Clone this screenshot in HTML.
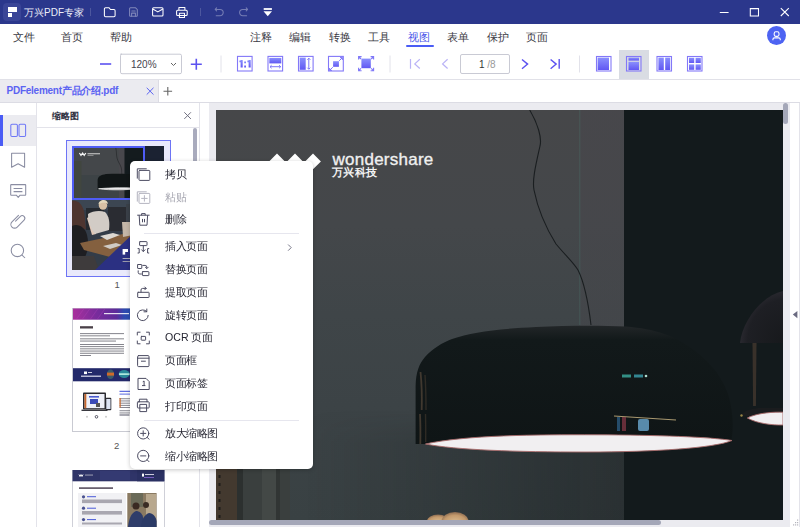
<!DOCTYPE html>
<html><head><meta charset="utf-8">
<style>
*{margin:0;padding:0;box-sizing:border-box}
html,body{width:800px;height:527px;overflow:hidden;background:#fff;font-family:"Liberation Sans",sans-serif;color:#333}
.a{position:absolute}
#title{left:0;top:0;width:800px;height:24px;background:#2b378c}
#menu{left:0;top:24px;width:800px;height:26px;background:#fff}
.mi{position:absolute;top:28px;font-size:11px;line-height:18px;color:#3a3a44;white-space:nowrap}
#tool{left:0;top:50px;width:800px;height:30px;background:#fff;border-bottom:1px solid #e1e1e8}
#tabs{left:0;top:80px;width:800px;height:23px;background:#fff;border-bottom:1px solid #dcdce4}
#tab1{left:0;top:80px;width:159px;height:22px;background:#ebebf0;border-right:1px solid #dcdce4}
#side{left:0;top:103px;width:37px;height:424px;background:#fff;border-right:1px solid #e3e3ea}
#panel{left:37px;top:103px;width:163px;height:424px;background:#fff;border-right:1px solid #e3e3ea}
#canvas{left:209px;top:103px;width:581px;height:424px;background:#ebebf0}
#rstrip{left:790px;top:103px;width:10px;height:424px;background:#fff;border-right:1px solid #e3e3ea}
#page{left:216px;top:110px;width:567px;height:410px;background:#404246;overflow:hidden}
#ctx{left:130px;top:161px;width:183px;height:308px;background:#fff;border-radius:5px;box-shadow:0 1px 4px rgba(0,0,0,.22)}
.ci{position:absolute;left:34.5px;font-size:10px;transform:scale(1.06);transform-origin:0 50%;line-height:14px;color:#33333d;white-space:nowrap}
.ic{position:absolute;left:6px;width:14px;height:14px}
</style></head><body>
<div id="title" class="a">
<div class="a" style="left:3px;top:3px;width:18px;height:18px;border-radius:4px;background:#3a4597"></div>
<div class="a" style="left:7.5px;top:7px;width:9.5px;height:5px;background:#fff"></div>
<div class="a" style="left:7.5px;top:12.75px;width:4.5px;height:4.25px;background:#fff"></div>
<div class="a" style="left:24px;top:4.5px;font-size:10px;line-height:16px;color:#eceef8;white-space:nowrap">万兴PDF专家</div>
<div class="a" style="left:90px;top:8px;width:1px;height:8px;background:rgba(255,255,255,.16)"></div>
<div class="a" style="left:200px;top:8px;width:1px;height:8px;background:rgba(255,255,255,.16)"></div>
<svg class="a" style="left:0;top:0" width="800" height="24" fill="none" stroke="#fff" stroke-width="1.05" stroke-linejoin="round" stroke-linecap="round">
<path d="M104.4 8.9a1.2 1.2 0 0 1 1.2-1.2h3.3l1.6 1.8h3.4a1.2 1.2 0 0 1 1.2 1.2v4.8a1.2 1.2 0 0 1-1.2 1.2h-8.3a1.2 1.2 0 0 1-1.2-1.2z"/>
<g opacity=".4"><path d="M129.6 8.6a.8.8 0 0 1 .8-.8h5.2l1.7 1.7v6a.8.8 0 0 1-.8.8h-6.1a.8.8 0 0 1-.8-.8z"/><path d="M131.6 16.1v-3h3.8v3M131.8 10.9h3.4"/></g>
<path d="M153.6 7.7h8.4a1 1 0 0 1 1 1v6.2a1 1 0 0 1-1 1h-8.4a1 1 0 0 1-1-1v-6.2a1 1 0 0 1 1-1z"/><path d="M153.2 9.2l4.6 2.7l4.6-2.7"/>
<path d="M178.9 10.1v-2.6h6v2.6M177.6 10.2h8.6a1 1 0 0 1 1 1v3.3a1 1 0 0 1-1 1h-8.6a1 1 0 0 1-1-1v-3.3a1 1 0 0 1 1-1zM179.4 13.2h5.1v4.2h-5.1z"/>
<g opacity=".35"><path d="M216.6 7.9l-1.4 1.5l1.4 1.5M215.3 9.4h4.7a3.2 3.2 0 0 1 0 6.4h-3.8"/>
<path d="M246.2 7.9l1.4 1.5l-1.4 1.5M247.5 9.4h-4.7a3.2 3.2 0 0 0 0 6.4h3.8"/></g>
<path d="M263.7 8.1h8.2v1.8h-8.2z" fill="#fff" stroke="none"/>
<path d="M263.5 11.3h8.5l-4.25 5z" fill="#fff" stroke="none"/>
<path d="M719.8 12.5h8.8" stroke-linecap="butt"/>
<path d="M750.3 8.6h8.2v7.4h-8.2z" stroke-linejoin="miter"/>
<path d="M780.8 8.2l8 7.8M788.8 8.2l-8 7.8" stroke-linecap="butt"/>
</svg>
</div>
<div id="menu" class="a"></div>
<div class="mi" style="left:12.5px">文件</div>
<div class="mi" style="left:61px">首页</div>
<div class="mi" style="left:109.5px">帮助</div>
<div class="mi" style="left:249.5px">注释</div>
<div class="mi" style="left:289px">编辑</div>
<div class="mi" style="left:328.5px">转换</div>
<div class="mi" style="left:367.5px">工具</div>
<div class="mi" style="left:407.5px;color:#4a55e8">视图</div>
<div class="a" style="left:406px;top:45px;width:28px;height:2px;background:#4a5cf5;border-radius:1px"></div>
<div class="mi" style="left:447px">表单</div>
<div class="mi" style="left:486.5px">保护</div>
<div class="mi" style="left:525.5px">页面</div>
<div class="a" style="left:767px;top:26px;width:19px;height:19px;border-radius:50%;background:#4d63f2"></div>
<svg class="a" style="left:767px;top:26px" width="19" height="19" fill="none" stroke="#fff" stroke-width="1.1"><rect x="7.2" y="5.8" width="4.8" height="4.6" rx="1.6"/><path d="M5.9 14.3v-.8a1.6 1.6 0 0 1 1.6-1.6h4.2a1.6 1.6 0 0 1 1.6 1.6v.8"/></svg>
<div id="tool" class="a"></div>
<svg class="a" style="left:0;top:50px" width="800" height="29" fill="none" stroke-linecap="butt">
<defs>
<linearGradient id="g1" x1="0" y1="0" x2="0" y2="1"><stop offset="0" stop-color="#8a90fd"/><stop offset="1" stop-color="#6158f3"/></linearGradient>
</defs>
<g stroke="#5c52f0" stroke-width="1.6"><path d="M100 14h11.2"/><path d="M190.8 14.2h11M196.3 8.7v11"/></g>
<path d="M120.5 4.5h59.5a1.5 1.5 0 0 1 1.5 1.5v16.5a1.5 1.5 0 0 1-1.5 1.5h-58a1.5 1.5 0 0 1-1.5-1.5v-16.5a1.5 1.5 0 0 1 1.5-1.5z" stroke="#c9cad4" stroke-width="1" transform="translate(0 -.3)"/>
<path d="M171 13l2.5 2.5l2.5-2.5" stroke="#666" stroke-width="1"/>
<path d="M221 5.5v17M390 5.5v17M579.5 5.5v17" stroke="#e2e2ea" stroke-width="1"/>
<g transform="translate(0 0)">
<rect x="237.5" y="6.4" width="14.6" height="14.6" stroke="#8378f8" stroke-width="1.1"/>
<g fill="url(#g1)" stroke="none"><path d="M240.6 10h2.1v7.6h-2.1zM239.4 10.6l1.4-.6v2l-1.4.3zM248.6 10h2.1v7.6h-2.1zM247.4 10.6l1.4-.6v2l-1.4.3zM244.2 11.5h1.8v1.8h-1.8zM244.2 15.6h1.8v1.8h-1.8z"/></g>
<rect x="268" y="6.4" width="14.6" height="14.6" stroke="#8378f8" stroke-width="1.1"/>
<rect x="269.3" y="7.9" width="12" height="5.5" fill="url(#g1)" stroke="none"/>
<path d="M270 16.7h10.7M271.6 15.2l-1.6 1.5l1.6 1.5M279.1 15.2l1.6 1.5l-1.6 1.5" stroke="#7f78f8" stroke-width="1"/>
<rect x="298.5" y="6.4" width="14.6" height="14.6" stroke="#8378f8" stroke-width="1.1"/>
<rect x="299.7" y="7.6" width="6" height="12.2" fill="url(#g1)" stroke="none"/>
<path d="M308.8 8.2v11M307.3 9.7l1.5-1.5l1.5 1.5M307.3 17.7l1.5 1.5l1.5-1.5" stroke="#7f78f8" stroke-width="1"/>
<rect x="328.5" y="6.4" width="14.8" height="14.6" stroke="#8378f8" stroke-width="1.1"/>
<rect x="333.1" y="11.2" width="5.8" height="5.6" fill="url(#g1)" stroke="none"/>
<path d="M339.2 10.8l3.2-3.2M340 7.6h2.4v2.4M332.8 17.2l-3.2 3.2M329.6 18v2.4h2.4" stroke="#7f78f8" stroke-width="1"/>
<rect x="361.4" y="8.6" width="9.4" height="9.6" fill="url(#g1)" stroke="none"/>
<path d="M358.6 9.6v-3h3M373.6 9.6v-3h-3M358.6 17.8v3h3M373.6 17.8v3h-3M359 7l2 2M373.2 7l-2 2M359 20.4l2-2M373.2 20.4l-2-2" stroke="#7f78f8" stroke-width="1.1"/>
</g>
<g stroke="#b9b2f6" stroke-width="1.2"><path d="M410.5 9v9.8M419.8 9.3l-5 4.6l5 4.6M447.6 9.3l-5 4.6l5 4.6"/></g>
<rect x="460.5" y="4.5" width="49" height="19" rx="1.5" stroke="#c9cad4" stroke-width="1"/>
<g stroke="#5c52f0" stroke-width="1.4"><path d="M522 9.5l5.6 4.6l-5.6 4.6M550.6 9.5l5.6 4.6l-5.6 4.6M559.2 9v9.8"/></g>
<rect x="619" y="-2" width="30" height="31" fill="#d9dce3" stroke="none"/>
<rect x="596.5" y="6.5" width="14.5" height="14.5" stroke="#8378f8" stroke-width="1.1"/>
<rect x="597.6" y="7.6" width="11.4" height="12.4" fill="url(#g1)" stroke="none"/>
<rect x="626.5" y="6.5" width="14.5" height="14.5" stroke="#8378f8" stroke-width="1.1"/>
<rect x="628.5" y="7.6" width="10.5" height="3" fill="url(#g1)" stroke="none"/>
<rect x="628.5" y="11.8" width="10.5" height="8.2" fill="url(#g1)" stroke="none"/>
<rect x="657" y="6.5" width="14.5" height="14.5" stroke="#8378f8" stroke-width="1.1"/>
<rect x="658.4" y="7.6" width="5.4" height="12.4" fill="url(#g1)" stroke="none"/>
<rect x="665.2" y="7.6" width="5" height="12.4" fill="url(#g1)" stroke="none"/>
<rect x="687.5" y="6.5" width="14.5" height="14.5" stroke="#8378f8" stroke-width="1.1"/>
<rect x="689" y="7.8" width="5.2" height="5.2" fill="url(#g1)" stroke="none"/>
<rect x="695.6" y="7.8" width="5.2" height="5.2" fill="url(#g1)" stroke="none"/>
<rect x="689" y="14.4" width="5.2" height="5.4" fill="url(#g1)" stroke="none"/>
<rect x="695.6" y="14.4" width="5.2" height="5.4" fill="url(#g1)" stroke="none"/>
</svg>
<div class="a" style="left:131px;top:57.5px;font-size:10px;line-height:14px;color:#44444e">120%</div>
<div class="a" style="left:479px;top:57.5px;font-size:10px;line-height:14px;color:#333;white-space:nowrap">1 <span style="color:#999">/8</span></div>
<div id="tabs" class="a"></div>
<div id="tab1" class="a"></div>
<div class="a" style="left:6.5px;top:83.5px;font-size:10px;line-height:14px;font-weight:bold;color:#5b63f2;white-space:nowrap;letter-spacing:-0.25px">PDFelement产品介绍.pdf</div>
<svg class="a" style="left:140px;top:80px" width="40" height="22" fill="none" stroke-width="1">
<path d="M146.7 87.8l6.8 6.8M153.5 87.8l-6.8 6.8" stroke="#5b63f2" transform="translate(-140 -80)"/>
<path d="M163.5 91.2h8.6M167.8 86.9v8.6" stroke="#666" stroke-width="1.1" transform="translate(-140 -80)"/>
</svg>
<div id="side" class="a"></div>
<div class="a" style="left:0;top:115px;width:36px;height:31px;background:#ebebf0"></div>
<div class="a" style="left:0;top:115px;width:3px;height:31px;background:#4a5cf5"></div>
<svg class="a" style="left:0;top:103px" width="36" height="170" fill="none" stroke-width="1.05" stroke-linejoin="round">
<g transform="translate(0 -103)">
<rect x="10.8" y="124.3" width="6.6" height="12.2" rx="1.2" stroke="#6f78f6"/>
<rect x="19" y="124.3" width="6.6" height="12.2" rx="1.2" stroke="#6f78f6"/>
<g stroke="#8a8da2">
<path d="M11.6 153.3h13v14l-6.5-3.6l-6.5 3.6z"/>
<path d="M11.2 184.6h14a.5.5 0 0 1 .5.5v9.6a.5.5 0 0 1-.5.5h-5.1l-1.9 2.2l-1.9-2.2h-5.1a.5.5 0 0 1-.5-.5v-9.6a.5.5 0 0 1 .5-.5z"/>
<path d="M13.6 188.4h8.8M13.6 191.6h8.8"/>
<path d="M18.49 215.28L11.98 221.78A3.7 3.7 0 0 0 17.22 227.02L24.07 220.02A2.6 2.6 0 0 0 20.4 216.34L15.59 221.15" stroke-linecap="round"/>
<circle cx="17.4" cy="250.4" r="6.2"/><path d="M21.8 254.8l3.2 3.2"/>
</g></g></svg>
<div id="panel" class="a"></div>
<div class="a" style="left:37px;top:127px;width:162px;height:1px;background:#e3e3ea"></div>
<div class="a" style="left:51.5px;top:108.5px;font-size:9px;line-height:14px;font-weight:bold;color:#2c2c3c;white-space:nowrap">缩略图</div>
<svg class="a" style="left:180px;top:108px" width="16" height="16" fill="none" stroke="#707080" stroke-width="1"><path d="M4.3 4.3l6.6 6.6M10.9 4.3l-6.6 6.6"/></svg>
<div class="a" style="left:193px;top:128px;width:4px;height:60px;border-radius:2px;background:#a9abbd"></div>
<!-- thumb 1 -->
<div class="a" style="left:66px;top:140px;width:105px;height:137px;border:1px solid #6d74f5;background:#e9e9fb"></div>
<svg class="a" style="left:72px;top:146px" width="92" height="124">
<g transform="translate(-72 -146)">
<rect x="72" y="146" width="92" height="54" fill="#44474a"/>
<rect x="72" y="175" width="92" height="25" fill="#3b4244" opacity=".7"/>
<rect x="119" y="146" width="5.5" height="54" fill="#48474c"/>
<rect x="124.5" y="146" width="39.5" height="54" fill="#141b1e"/><rect x="145" y="146" width="19" height="54" fill="#1b2232"/>
<rect x="72" y="161" width="2.5" height="39" fill="#463c34"/><rect x="74.5" y="161" width="7" height="39" fill="#41463f"/>
<path d="M97.6 190V180C98 176 101 175 106 174C118 173.5 130 173.6 135 175C138 177 139 182 138.5 190Z" fill="#111617"/>
<path d="M98.5 188.8C110 187.6 130 187.6 138.5 188.4C130 190 110 190.4 98.5 188.8Z" fill="#eee" stroke="#e4e4e4" stroke-width=".8"/>
<path d="M115 146c2 4 1 8 2 12s3 6 4 9s0.5 5 0.8 7" stroke="#1a1c1e" stroke-width=".5" fill="none"/>
<path d="M145 183c2-6 8-9 19-9v16h-19z" fill="#161b1d"/>
<path d="M146 188.5c6-1 12-1 18-1v2.4c-6 0-12 0-18-1.4z" fill="#ddd"/>
<path d="M79.4 153l1.6 2.4l1.6-2.4l1.6 2.4l1.6-2.4" stroke="#f4f4f4" stroke-width="1.2" fill="none"/>
<rect x="87.5" y="153.2" width="12.5" height="1.1" fill="#c8c8c8"/><rect x="87.5" y="155" width="6" height=".8" fill="#999"/>
<rect x="72" y="200" width="92" height="70" fill="#333c48"/>
<rect x="72" y="200" width="92" height="10" fill="#3c4652"/>
<rect x="86" y="208" width="18" height="22" fill="#262a30"/>
<rect x="108" y="207" width="20" height="24" fill="#2a2c32"/>
<rect x="126" y="204" width="14" height="20" fill="#3a4048"/>
<path d="M72 201c6-1 10 3 12 10c1 6 1 12 2 18l-14 4z" fill="#4e3530"/>
<path d="M72 226c6-3 13 1 15 9c2 8 1 16-2 22l-13 2z" fill="#1e1e22"/>
<path d="M87 218l4-2l4 8l1 10l-4 1z" fill="#e0c8b8"/>
<path d="M88 214c4-3 12-4 17-2c4 4 5 10 4 18l-14 4c-4-5-7-12-7-20z" fill="#d2ccc6"/>
<circle cx="103" cy="205.5" r="4.2" fill="#d8c0a4"/>
<path d="M98.5 204.5c0-5 9-6.5 9.5-.5c-2-1.5-6.5-2-9.5.5z" fill="#e4d8bc"/>
<path d="M80 243L130 232.5V244L110 257L84 250Z" fill="#84603f"/>
<path d="M100 236l13-3l7 2l-13 5z" fill="#dcd8d2"/>
<path d="M103 246l13-3l6 2l-12 4z" fill="#cfcac4"/>
<path d="M122 222h11v13l-10 2z" fill="#c4b6a8"/>
<path d="M72 256h22l5 14h-27z" fill="#3e3b3c"/>
<path d="M95 270L164 204V270Z" fill="#2b3082"/>
<rect x="122.6" y="249" width="5.4" height="3" fill="#fff"/><rect x="122.6" y="252" width="2.6" height="2.6" fill="#fff"/>
<rect x="122.6" y="258" width="9" height="1" fill="#aab"/><rect x="122.6" y="261" width="9" height="1" fill="#99a"/>
</g></svg>
<div class="a" style="left:72px;top:146px;width:73px;height:54px;border:2.4px solid #4f5cf5"></div>
<div class="a" style="left:114.5px;top:279px;font-size:9.5px;line-height:12px;color:#555">1</div>
<!-- thumb 2 -->
<svg class="a" style="left:72px;top:308px" width="93" height="125">
<defs><linearGradient id="hdr2" x1="0" y1="0" x2="1" y2="0"><stop offset="0" stop-color="#a8309c"/><stop offset=".25" stop-color="#7a2c9c"/><stop offset=".48" stop-color="#5c2c9a"/><stop offset=".56" stop-color="#2e4ab0"/><stop offset="1" stop-color="#1a5cb4"/></linearGradient>
<pattern id="ln" width="4" height="1.25" patternUnits="userSpaceOnUse"><rect width="4" height=".7" fill="#6a6a72"/></pattern>
<pattern id="ln2" width="4" height="1.3" patternUnits="userSpaceOnUse"><rect width="4" height=".7" fill="#7a7a84"/></pattern></defs>
<g transform="translate(-72 -308)">
<rect x="72.5" y="308.5" width="91.5" height="123" fill="#fff" stroke="#c9cad2"/>
<rect x="73" y="308.5" width="91" height="11.2" fill="url(#hdr2)"/>
<path d="M76 319.7l8-11.2M82 319.7l8-11.2M90 319.7l8-11.2M97 319.7l8-11.2" stroke="#c04ac0" stroke-width=".8" opacity=".35"/>
<rect x="104" y="313" width="25" height="1.2" fill="#fff" opacity=".85"/>
<rect x="80" y="326.2" width="13" height="2.3" fill="#4a4048"/>
<rect x="80" y="333.2" width="44" height=".9" fill="#77777f"/>
<rect x="80" y="335.4" width="30" height=".9" fill="#77777f"/>
<rect x="80" y="338.4" width="44" height=".9" fill="#77777f"/>
<rect x="80" y="340.6" width="36" height=".9" fill="#77777f"/>
<rect x="80" y="344" width="44" height=".9" fill="#77777f"/>
<rect x="80" y="346.2" width="44" height=".9" fill="#77777f"/>
<rect x="80" y="348.4" width="44" height=".9" fill="#77777f"/>
<rect x="80" y="350.6" width="44" height=".9" fill="#77777f"/>
<rect x="80" y="352.8" width="44" height=".9" fill="#77777f"/>
<rect x="80" y="355" width="11" height=".9" fill="#77777f"/>
<rect x="73" y="368.2" width="91" height="13.1" fill="#23296a"/>
<rect x="84" y="371.5" width="3" height="2.6" fill="#fff"/><rect x="88" y="372" width="4" height="1" fill="#ccd"/>
<rect x="81" y="375.6" width="20" height="1.2" fill="#dde"/>
<ellipse cx="110.5" cy="374.3" rx="3.7" ry="4.8" fill="#3a5a6a"/><rect x="107" y="372.6" width="7" height="3" fill="#d06a2a"/>
<ellipse cx="124.2" cy="374" rx="5.5" ry="4" fill="#2a8a9a"/><rect x="119" y="373.4" width="10.5" height="1.4" fill="#cfe"/>
<rect x="83" y="392.6" width="23" height="17" rx=".8" fill="#2a2a30"/>
<rect x="84.5" y="394" width="20" height="14.2" fill="#eef0f8"/>
<rect x="84.5" y="394" width="1.8" height="14.2" fill="#c8662a"/>
<rect x="89" y="396" width="10" height="1.6" fill="#4a5ad0"/>
<rect x="90" y="399" width="8" height="5" fill="#3a4ab8"/>
<rect x="96" y="403" width="4" height="4" fill="#555"/>
<rect x="81.5" y="409.6" width="26" height="1.4" fill="#3a3a40"/>
<rect x="105.5" y="397.8" width="5.8" height="12.4" rx="1" fill="#2a2a30"/><rect x="106.3" y="399" width="4.2" height="10" fill="#dde4f4"/>
<circle cx="87" cy="416.8" r="1" fill="#ccc"/><circle cx="96.5" cy="416.8" r="1.3" fill="none" stroke="#334" stroke-width=".8"/><circle cx="106" cy="416.8" r="1" fill="#ccc"/>
<rect x="119.5" y="390.8" width="44" height="1" fill="#3a4ad8"/><rect x="119.5" y="393.6" width="44" height="1" fill="#5a6ae0"/>
<rect x="119.5" y="398.3" width="44" height=".9" fill="#7a7a84"/>
<rect x="119.5" y="400.5" width="44" height=".9" fill="#7a7a84"/>
<rect x="119.5" y="402.7" width="44" height=".9" fill="#7a7a84"/>
<rect x="119.5" y="404.9" width="44" height=".9" fill="#7a7a84"/>
<rect x="119.5" y="407.1" width="44" height=".9" fill="#7a7a84"/>
<rect x="119.5" y="398" width="1.2" height="9.5" fill="#c8662a"/>
<rect x="119.5" y="410.3" width="44" height=".9" fill="#7a7a84"/>
<rect x="119.5" y="412.5" width="44" height=".9" fill="#7a7a84"/>
<rect x="119.5" y="414.5" width="10" height="1" fill="#556"/>
</g></svg>
<div class="a" style="left:114px;top:440px;font-size:9.5px;line-height:12px;color:#555">2</div>
<!-- thumb 3 -->
<svg class="a" style="left:72px;top:470px" width="93" height="57">
<g transform="translate(-72 -470)">
<rect x="72.5" y="470.5" width="92" height="60" fill="#fff" stroke="#cfd0d8"/>
<rect x="72.5" y="470" width="92" height="11.3" fill="#2f3468"/>
<rect x="100" y="471" width="30" height="9" fill="#363c74" opacity=".8"/>
<rect x="137" y="470" width="27" height="11.3" fill="#2a3062"/>
<path d="M79 474.5l1 2l1-2l1 2l1-2" stroke="#fff" stroke-width=".9" fill="none"/>
<rect x="85" y="474.6" width="8" height=".9" fill="#aab"/>
<rect x="142" y="473.6" width="2" height="3" fill="#fff"/><rect x="145" y="474" width="9" height="1" fill="#ccd"/><rect x="144" y="477" width="10" height=".8" fill="#8a6ad8"/>
<rect x="79" y="487.3" width="34" height="1.6" fill="#5a5060"/>
<rect x="78" y="493" width="48" height="36" fill="#f1f1f4"/>
<circle cx="83.5" cy="496.8" r="1.6" fill="#4a5290"/><rect x="87" y="496.2" width="9" height="1" fill="#4a5ad8"/>
<rect x="82" y="499.5" width="40" height="3.6" fill="#a9a7b0"/>
<circle cx="83.5" cy="508.2" r="1.6" fill="#4a5290"/><rect x="87" y="507.7" width="9" height="1" fill="#4a5ad8"/>
<rect x="82" y="511" width="40" height="3.6" fill="#a9a7b0"/>
<circle cx="83.5" cy="519.6" r="1.6" fill="#4a5290"/><rect x="87" y="519.1" width="9" height="1" fill="#4a5ad8"/>
<rect x="82" y="522.5" width="40" height="2" fill="#a9a7b0"/>
<rect x="127.3" y="493" width="29.3" height="36" fill="#8a7a62"/>
<rect x="131" y="493" width="12" height="14" fill="#6a6a58"/>
<rect x="146" y="494" width="10" height="30" fill="#b8a88e"/>
<path d="M128 527c1-8 3-14 8-16c3 0 6 2 7 6l2 10z" fill="#2f3d6a"/>
<circle cx="136" cy="506" r="3.5" fill="#3a2a22"/>
<path d="M141 527c1-8 3-12 8-14c4 0 7 4 7.6 8v6z" fill="#2b3a66"/>
<circle cx="146" cy="505" r="3" fill="#3a2c24"/>
</g></svg>

<div id="canvas" class="a"></div>
<div id="rstrip" class="a"></div>
<div id="page" class="a">
<svg class="a" style="left:0;top:0" width="567" height="410">
<defs>
<linearGradient id="wallv" x1="0" y1="0" x2="0" y2="1"><stop offset="0" stop-color="#464749"/><stop offset=".28" stop-color="#44474a"/><stop offset=".5" stop-color="#3f4548"/><stop offset=".72" stop-color="#3c4346"/><stop offset="1" stop-color="#394143"/></linearGradient>
<linearGradient id="strip" x1="0" y1="0" x2="0" y2="1"><stop offset="0" stop-color="#48474c"/><stop offset="1" stop-color="#46474b"/></linearGradient>
<linearGradient id="dome" x1="0" y1="0" x2="0" y2="1"><stop offset="0" stop-color="#222628"/><stop offset=".12" stop-color="#12191a"/><stop offset="1" stop-color="#0f1516"/></linearGradient>
<linearGradient id="rim" x1="0" y1="0" x2="0" y2="1"><stop offset="0" stop-color="#f6f4f6"/><stop offset=".65" stop-color="#e4e2e6"/><stop offset="1" stop-color="#b07878"/></linearGradient>
<radialGradient id="hair" cx=".5" cy=".6" r=".6"><stop offset="0" stop-color="#dcc096"/><stop offset=".7" stop-color="#c49a6c"/><stop offset="1" stop-color="#8a6a50"/></radialGradient>
</defs>
<rect x="0" y="0" width="408" height="410" fill="url(#wallv)"/>
<rect x="364" y="0" width="44" height="220" fill="url(#strip)" opacity=".6"/><rect x="364" y="220" width="44" height="190" fill="#3f4547" opacity=".5"/>
<path d="M363.8 0v215" stroke="#4a6a64" stroke-width=".7" opacity=".7"/>
<defs><linearGradient id="shd" x1="0" y1="0" x2="1" y2="0"><stop offset="0" stop-color="#0c1214" stop-opacity="0"/><stop offset="1" stop-color="#0c1214" stop-opacity=".38"/></linearGradient>
<linearGradient id="shdv" x1="0" y1="0" x2="0" y2="1"><stop offset="0" stop-color="#fff" stop-opacity="0"/><stop offset=".3" stop-color="#fff" stop-opacity="1"/></linearGradient>
<mask id="mk"><rect x="0" y="300" width="408" height="110" fill="url(#shdv)"/></mask></defs>
<rect x="90" y="300" width="318" height="110" fill="url(#shd)" mask="url(#mk)"/>
<rect x="408" y="0" width="159" height="410" fill="#131a1c"/>
<rect x="0" y="116" width="21" height="294" fill="#43392f"/><path d="M3.5 365v45" stroke="#1e1c1a" stroke-width="2" stroke-dasharray="3 5"/>
<rect x="21" y="116" width="53" height="294" fill="#3a3f3e"/><rect x="21" y="116" width="6" height="294" fill="#2c302f"/><rect x="46" y="116" width="14" height="294" fill="#434846"/><rect x="60" y="116" width="4" height="294" fill="#313534"/>
<path d="M313.7 0C322 14 326 28 324 36C320 54 316 70 318 80C322 100 330 118 340 134C350 146 357 152 362 160C368 172 372 190 375 215" stroke="#1a1e20" stroke-width="1.1" fill="none"/>
<path d="M199.6 334V276C200 262 203 254 209 247C217 238 226 233 236 229C256 222 280 219 320 217C350 215.5 384 215.3 410 216.5C440 219 458 226 472 236C490 248 504 262 512 284C517 300 518 318 515 333Z" fill="url(#dome)"/>
<path d="M204.5 262c1.5 14 1.5 26 1.2 38M204 304c.5 10 .5 20 .3 30" stroke="#6a5643" stroke-width="1.8" opacity=".55" fill="none"/>
<path d="M209 265c1 14 1 25 1 35M209.5 304c.3 10 .3 20 .2 28" stroke="#4e4032" stroke-width="1.4" opacity=".5" fill="none"/>

<path d="M209.5 334C250 325 320 324.6 380 324.8C440 325 495 327 516 330.5C498 338 440 342 370 342C300 342 240 340 209.5 334Z" fill="#f1eff1" stroke="#a86a6a" stroke-width=".9"/>
<g opacity=".85"><rect x="406" y="264.5" width="9" height="3" fill="#3aa598"/><rect x="418" y="264.5" width="9" height="3" fill="#3a9aa8"/><circle cx="430" cy="266" r="1.3" fill="#cfe"/></g>
<path d="M398 306l62 4" stroke="#a89870" stroke-width="1.2"/>
<rect x="401" y="307" width="3" height="14" fill="#2a5a80" opacity=".8"/><rect x="406" y="307" width="4" height="14" fill="#a04050" opacity=".6"/>
<rect x="422" y="309" width="11" height="12" rx="2" fill="#6aa8d0" opacity=".8"/>
<defs><radialGradient id="d2" cx="1" cy="1" r="1.1"><stop offset="0" stop-color="#17191c"/><stop offset=".75" stop-color="#1e1f24"/><stop offset=".95" stop-color="#2c2b32"/><stop offset="1" stop-color="#2a2a30"/></radialGradient></defs>
<path d="M524 233C526 212 545 186 567 181V233Z" fill="url(#d2)"/>
<path d="M536.5 233h4l-.6 63h-2.8z" fill="#3e342c" opacity=".9"/>
<path d="M525 305c4-5 12-7 20-7h22v8h-42z" fill="#1a1c1e"/>
<circle cx="525.5" cy="305.5" r="1.2" fill="#b8a050" opacity=".8"/>
<path d="M531.4 308C542 302.5 558 302 567 302.2V315C556 315.2 541 313.5 531.4 308Z" fill="#f1eff1" stroke="#a86a6a" stroke-width=".9"/>
<ellipse cx="222" cy="411" rx="11" ry="6.5" fill="url(#hair)"/>
<ellipse cx="239" cy="411" rx="13.5" ry="9" fill="url(#hair)"/>
</svg>
<svg class="a" style="left:50px;top:35px" width="60" height="30">
<path d="M11 8.5l7.9 7.9l-7.9 7.9l-7.9-7.9zM29 8.5l7.9 7.9l-7.9 7.9l-7.9-7.9zM47 8.5l7.9 7.9l-7.9 7.9l-7.9-7.9z" fill="#fff" transform="translate(0 0)"/>
</svg>
<div class="a" style="left:116.5px;top:40px;font-size:17px;line-height:20px;color:#f0f0f0;white-space:nowrap;letter-spacing:0.25px;-webkit-text-stroke:0.35px #f0f0f0">wondershare</div>
<div class="a" style="left:116px;top:56px;font-size:11px;line-height:13px;font-weight:bold;color:#f2f2f2;white-space:nowrap;letter-spacing:0.3px">万兴科技</div>
</div>
<div class="a" style="left:209px;top:520px;width:452px;height:5px;border-radius:2.5px;background:#a4a7b8"></div>
<div class="a" style="left:783px;top:103px;width:5px;height:21px;border-radius:2.5px;background:#a4a7b8"></div>
<svg class="a" style="left:790px;top:300px" width="10" height="30"><path d="M7.4 11l-4.6 3.6l4.6 3.6z" fill="#6a6a80"/></svg>
<svg class="a" style="left:790px;top:515px" width="10" height="12" fill="#b4b4bc"><rect x="7" y="4.5" width="1.2" height="1.2"/><rect x="5" y="7" width="1.2" height="1.2"/><rect x="7" y="7" width="1.2" height="1.2"/><rect x="3" y="9.3" width="1.2" height="1.2"/><rect x="5" y="9.3" width="1.2" height="1.2"/><rect x="7" y="9.3" width="1.2" height="1.2"/></svg>
<div id="ctx" class="a">
<div class="ci" style="top:6.9px;color:#262632">拷贝</div>
<div class="ci" style="top:29.6px;color:#a8a8b2">粘贴</div>
<div class="ci" style="top:52.2px;color:#262632">删除</div>
<div class="ci" style="top:79.2px;color:#262632">插入页面</div>
<div class="ci" style="top:102.0px;color:#262632">替换页面</div>
<div class="ci" style="top:124.8px;color:#262632">提取页面</div>
<div class="ci" style="top:147.6px;color:#262632">旋转页面</div>
<div class="ci" style="top:170.4px;color:#262632">OCR 页面</div>
<div class="ci" style="top:193.2px;color:#262632">页面框</div>
<div class="ci" style="top:216.0px;color:#262632">页面标签</div>
<div class="ci" style="top:238.8px;color:#262632">打印页面</div>
<div class="ci" style="top:266.3px;color:#262632">放大缩略图</div>
<div class="ci" style="top:289.1px;color:#262632">缩小缩略图</div>
<div class="a" style="left:14px;top:72px;width:155px;height:1px;background:#e6e6ee"></div>
<div class="a" style="left:14px;top:259px;width:155px;height:1px;background:#e6e6ee"></div>
<svg class="a" style="left:0;top:0" width="183" height="308" fill="none" stroke="#4c4c62" stroke-width="1" stroke-linejoin="round" stroke-linecap="round">
<g transform="translate(-130 -161)">
<path d="M137.3 178.2v-9.4h9"/><rect x="139" y="170.4" width="10.8" height="10" rx=".8"/>
<g stroke="#b4b4c0"><path d="M137.3 201.2v-9.4h9"/><rect x="139" y="193.4" width="10.8" height="10" rx=".8"/><path d="M144.4 195.6v5.6M141.6 198.4h5.6"/></g>
<path d="M137.6 215.2h11.6M141.6 215v-1.4h3.6v1.4M139.2 215.6l.6 9.6h7.2l.6-9.6M142.5 219.3v2.6M144.5 219.3v2.6"/>
<rect x="139.6" y="241.6" width="7.4" height="4" rx=".5"/><path d="M143.3 245.8v5.6M141.6 249.8l1.7 1.7l1.7-1.7M138 248.6h1.2v4.4h-1.2M148.8 248.6h-1.2v4.4h1.2"/>
<rect x="137.6" y="264.5" width="4.2" height="4" rx=".5"/><rect x="142.4" y="271.6" width="6.5" height="4" rx=".5"/><path d="M142.8 265.4h2.4a1.6 1.6 0 0 1 1.6 1.6v1.2M145.4 267.2l1.4 1.4l1.4-1.4M141.4 274h-1.6a1.6 1.6 0 0 1-1.6-1.6v-1.6"/>
<rect x="137.7" y="292.3" width="11.4" height="5.2" rx=".5"/><path d="M141 292.2v-2.2a1.6 1.6 0 0 1 1.6-1.6h3.4M144.8 287l1.4 1.4l-1.4 1.4"/>
<path d="M146.8 311.6a5.4 5.4 0 1 0 1.4 3.8M146.8 309v2.8h-2.8"/>
<path d="M137.3 335v-2.8h2.8M149.3 335v-2.8h-2.8M137.3 341v2.8h2.8M149.3 341v2.8h-2.8"/><rect x="141.2" y="336.4" width="4.4" height="3.8" rx=".4"/>
<rect x="137.6" y="355.6" width="11.4" height="11" rx="1"/><path d="M137.6 358.2h11.4M141.4 361.2h4"/>
<path d="M138.4 378.4h7.6l3.2 3.2v7.9h-10.8zM143.1 381.6l1-.6v4.6M142.4 385.6h2.6" />
<path d="M139.4 401.8v-2.6h7.6v2.6M138.2 401.8h10.2a.8.8 0 0 1 .8.8v4.6a.8.8 0 0 1-.8.8h-10.2a.8.8 0 0 1-.8-.8v-4.6a.8.8 0 0 1 .8-.8zM140.2 404.4h6.4v7.2h-6.4z"/>
<circle cx="143.2" cy="433.4" r="5.6"/><path d="M147.2 437.4l1.8 1.8M143.2 430.8v5.2M140.6 433.4h5.2"/>
<circle cx="143.2" cy="455.9" r="5.6"/><path d="M147.2 459.9l1.8 1.8M140.6 455.9h5.2"/>
<path d="M288.4 244.8l2.8 2.8l-2.8 2.8" stroke="#777788"/>
</g></svg>
</div>
</body></html>
